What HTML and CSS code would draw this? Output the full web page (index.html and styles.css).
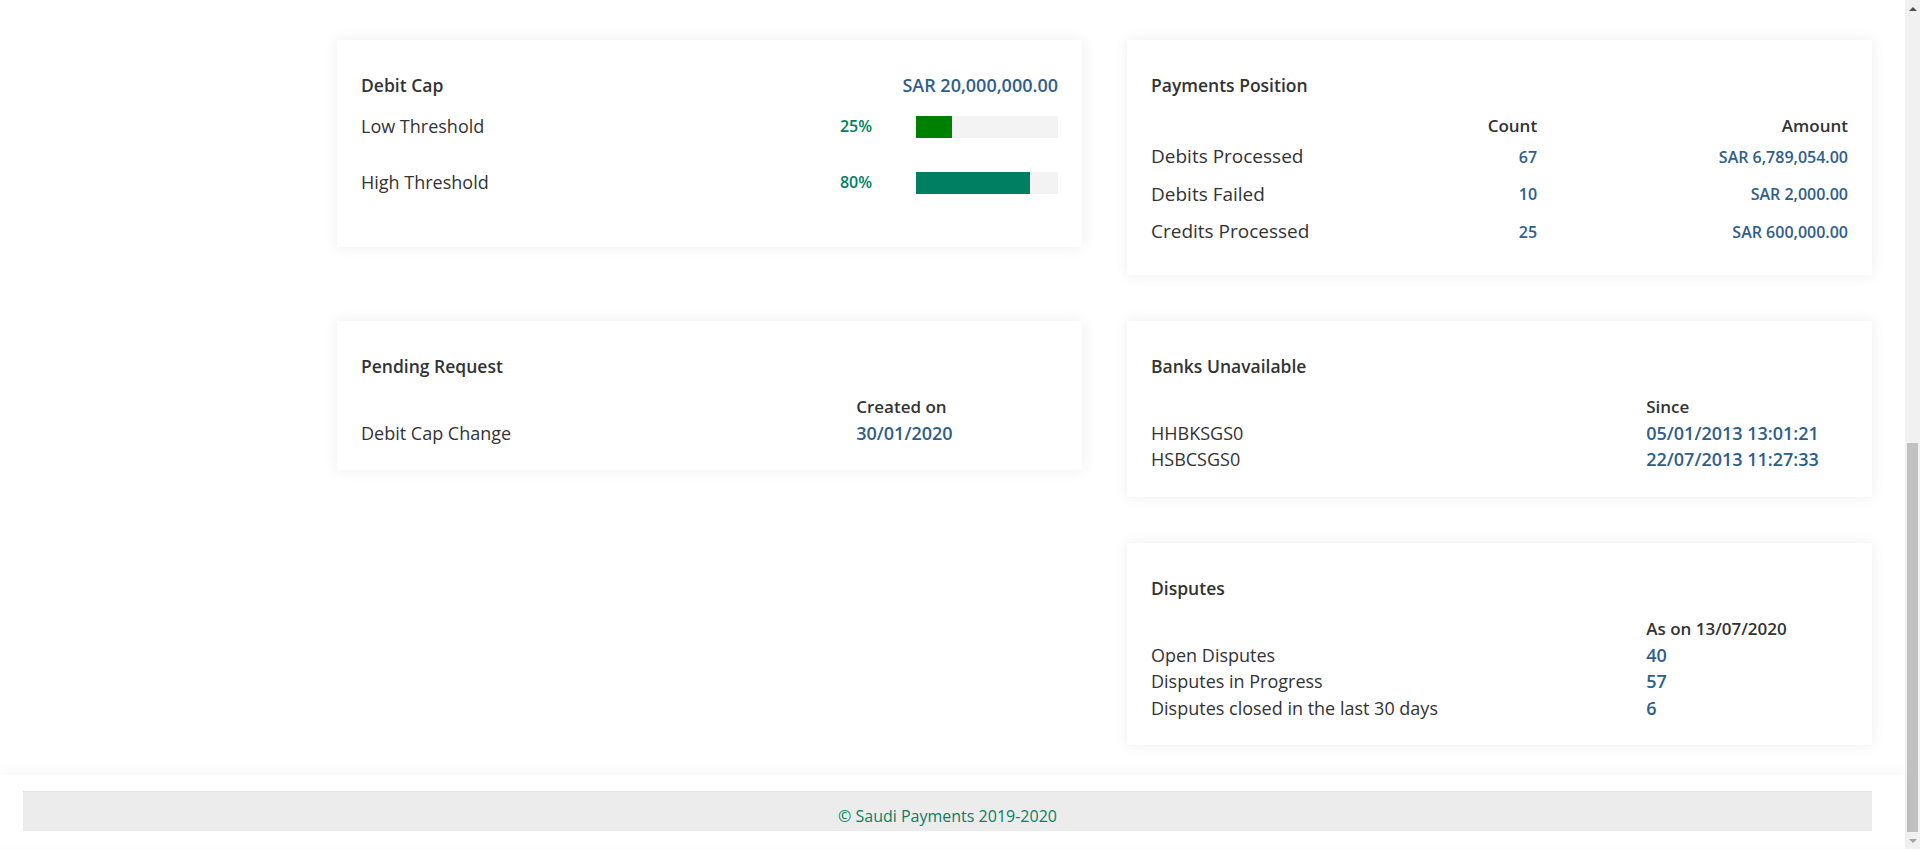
FILE: index.html
```html
<!DOCTYPE html>
<html lang="en">
<head>
<meta charset="utf-8">
<title>Dashboard - Saudi Payments</title>
<link rel="stylesheet" href="styles.css">
</head>
<body>
<div class="page">
  <main class="main">
    <div class="grid">
      <div class="card card-tail" aria-hidden="true"></div>
      <div class="card card-tail" aria-hidden="true"></div>

      <section class="card card-cap">
        <div class="cap-head">
          <h2 class="card-title">Debit Cap</h2>
          <span class="value">SAR 20,000,000.00</span>
        </div>
        <div class="threshold">
          <span class="th-label">Low Threshold</span>
          <span class="pct">25%</span>
          <div class="bar"><div class="bar-fill fill-low" style="width:25%"></div></div>
        </div>
        <div class="threshold">
          <span class="th-label">High Threshold</span>
          <span class="pct">80%</span>
          <div class="bar"><div class="bar-fill fill-high" style="width:80%"></div></div>
        </div>
      </section>

      <section class="card">
        <h2 class="card-title">Payments Position</h2>
        <div class="pos-table">
          <span></span><span class="th num">Count</span><span class="th num">Amount</span>
          <span class="pos-label">Debits Processed</span><span class="pos-value num">67</span><span class="pos-value num">SAR 6,789,054.00</span>
          <span class="pos-label">Debits Failed</span><span class="pos-value num">10</span><span class="pos-value num">SAR 2,000.00</span>
          <span class="pos-label">Credits Processed</span><span class="pos-value num">25</span><span class="pos-value num">SAR 600,000.00</span>
        </div>
      </section>

      <section class="card">
        <h2 class="card-title">Pending Request</h2>
        <div class="info-table">
          <span></span><span class="th">Created on</span>
          <span class="info-label">Debit Cap Change</span><span class="value">30/01/2020</span>
        </div>
      </section>

      <section class="card">
        <h2 class="card-title">Banks Unavailable</h2>
        <div class="info-table">
          <span></span><span class="th">Since</span>
          <span class="info-label">HHBKSGS0</span><span class="value">05/01/2013 13:01:21</span>
          <span class="info-label">HSBCSGS0</span><span class="value">22/07/2013 11:27:33</span>
        </div>
      </section>

      <section class="card card-right">
        <h2 class="card-title">Disputes</h2>
        <div class="info-table">
          <span></span><span class="th">As on 13/07/2020</span>
          <span class="info-label">Open Disputes</span><span class="value">40</span>
          <span class="info-label">Disputes in Progress</span><span class="value">57</span>
          <span class="info-label">Disputes closed in the last 30 days</span><span class="value">6</span>
        </div>
      </section>
    </div>
  </main>
  <footer class="site-footer">
    <div class="footer-bar">© Saudi Payments 2019-2020</div>
  </footer>
</div>
<div class="scrollbar" aria-hidden="true">
  <div class="sb-btn"><span class="sb-arrow-up"></span></div>
  <div class="sb-track"><div class="sb-thumb"></div></div>
  <div class="sb-btn"><span class="sb-arrow-down"></span></div>
</div>
</body>
</html>
```

FILE: styles.css
```css
* { box-sizing: border-box; }

html, body {
  margin: 0;
  padding: 0;
  background: #ffffff;
  height: 849px;
  overflow: hidden;
}

body {
  display: flex;
  font-family: "Open Sans", "Noto Sans", sans-serif;
  color: #333333;
  font-size: 18px;
}

.page {
  flex: 1;
  min-width: 0;
}

.main {
  padding: 0 33px 30px 337px;
  background: #ffffff;
}

.grid {
  display: grid;
  grid-template-columns: 1fr 1fr;
  column-gap: 45px;
  row-gap: 46px;
  align-items: start;
  margin-top: -6px;
}

.card {
  background: #ffffff;
  box-shadow: 0 0 14px rgba(0, 0, 0, 0.07);
  padding: 33px 24px 24px;
}

.card-tail {
  height: 0;
  padding: 0;
}

.card-right {
  grid-column: 2;
}

.card-title {
  margin: 0;
  font-size: 17.5px;
  line-height: 25px;
  font-weight: 600;
  color: #333333;
}

.value {
  font-weight: 600;
  color: #2e5e8b;
  font-size: 18px;
}

/* Debit cap */
.card-cap {
  padding-bottom: 37px;
}

.cap-head {
  display: flex;
  justify-content: space-between;
  align-items: center;
  line-height: 25px;
}

.threshold {
  display: grid;
  grid-template-columns: 1fr auto 142px;
  column-gap: 44px;
  align-items: center;
  padding: 16px 0;
  line-height: 24px;
}

.th-label {
  font-size: 18px;
}

.pct {
  font-size: 16px;
  font-weight: 600;
  color: #00805f;
}

.bar {
  height: 22px;
  margin-top: 2px;
  background: #f3f3f3;
}

.bar-fill {
  height: 100%;
}

.fill-low { background: #008000; }
.fill-high { background: #007f62; }

/* Payments position */
.pos-table {
  display: grid;
  grid-template-columns: 40% 15.4% 1fr;
  align-items: center;
  margin-top: 16px;
}

.th {
  font-size: 17px;
  font-weight: 600;
  line-height: 24px;
  color: #333333;
}

.num { text-align: right; }

.pos-label {
  font-size: 19px;
  line-height: 37.5px;
}

.pos-value {
  font-size: 16px;
  font-weight: 600;
  color: #2e5e8b;
}

/* Generic label / value tables */
.info-table {
  display: grid;
  grid-template-columns: 71.05% 1fr;
  margin-top: 15px;
  line-height: 26.5px;
}

.info-table .th {
  line-height: 26px;
}

.info-label {
  font-size: 18px;
}

/* Footer */
.site-footer {
  background: #ffffff;
  padding: 16px 33px 16px 23px;
  box-shadow: 0 -3px 14px rgba(0, 0, 0, 0.035);
  position: relative;
}

.footer-bar {
  background: #ececec;
  border-top: 1px solid #e3e3e3;
  height: 40px;
  padding-top: 13px;
  line-height: 22px;
  text-align: center;
  font-size: 16px;
  color: #0a7f61;
}

/* Browser scrollbar (page is scrolled to the bottom) */
.scrollbar {
  width: 15px;
  flex: none;
  display: flex;
  flex-direction: column;
  background: #f1f1f1;
}

.sb-btn {
  height: 17px;
  display: flex;
  align-items: center;
  justify-content: center;
}

.sb-arrow-up {
  width: 0;
  height: 0;
  border-left: 4px solid transparent;
  border-right: 4px solid transparent;
  border-bottom: 4px solid #505050;
}

.sb-arrow-down {
  width: 0;
  height: 0;
  border-left: 4px solid transparent;
  border-right: 4px solid transparent;
  border-top: 4px solid #a3a3a3;
}

.sb-track {
  flex: 1;
  display: flex;
  flex-direction: column;
  justify-content: flex-end;
}

.sb-thumb {
  height: 389px;
  margin: 0 2px;
  background: #c1c1c1;
}
```
